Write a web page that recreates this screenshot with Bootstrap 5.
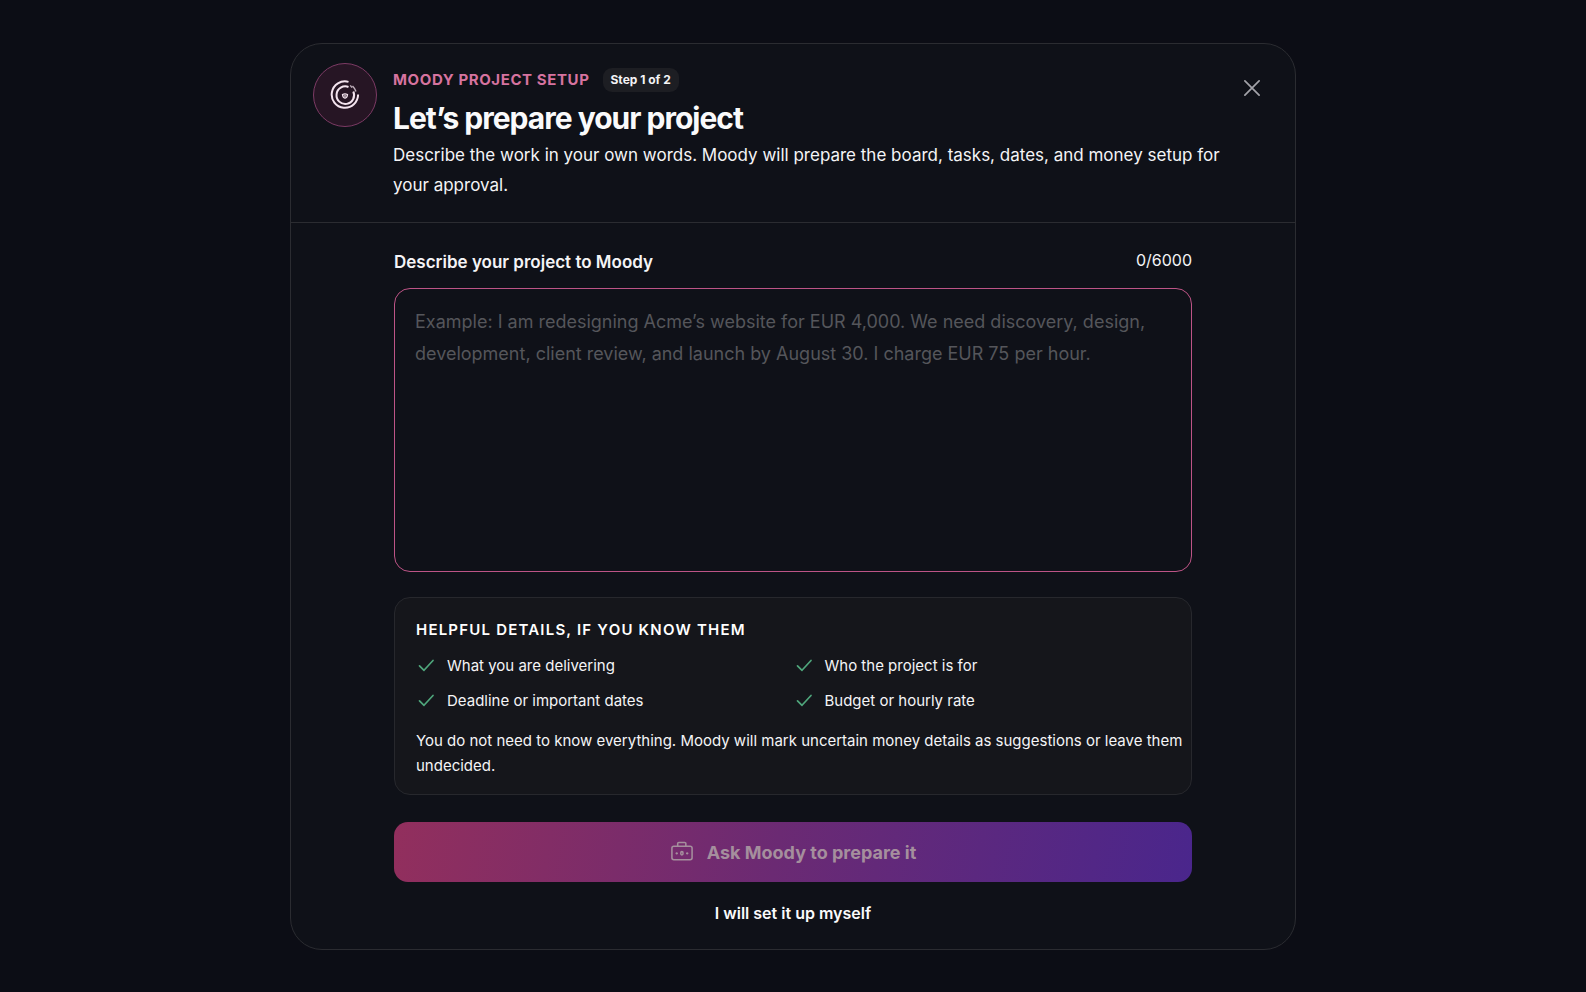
<!DOCTYPE html>
<html lang="en" data-bs-theme="dark">
<head>
<meta charset="utf-8">
<meta name="viewport" content="width=device-width, initial-scale=1">
<title>Moody project setup</title>
<link href="https://cdn.jsdelivr.net/npm/bootstrap@5.3.0/dist/css/bootstrap.min.css" rel="stylesheet">
<style>
  body {
    font-family: Inter, "Liberation Sans", sans-serif;
    background: #0c0d15;
    color: #f4f4f6;
  }
  .setup-page { padding: 43px 16px 42px; }
  .setup-card {
    max-width: 1006px;
    background: #0f1118;
    border: 1px solid #2b2c31;
    border-radius: 32px;
  }
  .setup-header { padding: 19px 22px 22px; border-bottom: 1px solid #2b2c31; }
  .setup-logo {
    width: 64px; height: 64px;
    color: #f3e3ee;
    background: #261524;
    border: 1px solid #7c3a64;
  }
  .setup-heading { padding-top: 5px; }
  .eyebrow-row { gap: 13px; }
  .eyebrow { font-size: 15px; line-height: 24px; font-weight: 700; letter-spacing: .04em; color: #d6739f; }
  .step-pill {
    font-size: 12px; line-height: 16px; font-weight: 700;
    padding: 4px 8px; border-radius: 9px;
    background: #1d1e23; color: #f4f4f6;
  }
  .setup-title { font-size: 30px; line-height: 40px; font-weight: 700; letter-spacing: -1px; margin: 6px 0 2px; color: #fafafb; }
  .setup-lead { font-size: 17px; line-height: 30px; }
  .btn-dismiss { padding: 12px; margin: 5px 1px 0 0; color: #a3a3a9; border: 0; line-height: 1; }
  .setup-body { padding: 26px 103px 18px; }
  .field-row { margin-bottom: 13px; }
  .field-label { font-size: 17px; line-height: 26px; font-weight: 600; }
  .field-count { font-size: 16px; line-height: 22px; }
  .brief-input, .brief-input:focus {
    height: 284px;
    padding: 17px 20px;
    font-size: 18px; line-height: 32px;
    background: #0f1118;
    border: 1px solid #bd5486;
    border-radius: 16px;
    box-shadow: none;
    resize: none;
  }
  .brief-input::placeholder { color: #55565b; opacity: 1; }
  .tips {
    margin-top: 25px;
    padding: 20px 4px 16px 21px;
    background: #15161b;
    border: 1px solid #27282d;
    border-radius: 16px;
  }
  .tips-title { font-size: 15px; line-height: 24px; font-weight: 600; letter-spacing: .08em; margin-bottom: 11px; }
  .tips-text { font-size: 15px; line-height: 25px; }
  .tips-list { row-gap: 10px; margin-bottom: 15px; }
  .tip-item { gap: 9px; }
  .tip-icon { color: #4fa67c; }
  .btn-ask, .btn-ask:disabled {
    margin-top: 27px; height: 60px; gap: 13px;
    font-size: 18px; font-weight: 700;
    color: #a58f9d;
    border: 0; border-radius: 14px;
    background: linear-gradient(100deg, #922f5d, #6b2a73 48%, #4a268c);
    opacity: 1;
  }
  .btn-self { margin-top: 13px; padding: 6px 12px; font-size: 16px; line-height: 24px; font-weight: 600; color: #fafafb; border: 0; }
  @media (max-width: 767px) {
    .setup-body { padding-left: 22px; padding-right: 22px; }
  }
</style>
</head>
<body>
<main class="setup-page">
  <section class="setup-card mx-auto" role="dialog" aria-labelledby="setup-title">
    <header class="setup-header d-flex align-items-start">
      <div class="setup-logo rounded-circle d-flex align-items-center justify-content-center flex-shrink-0 me-3">
        <svg width="30" height="30" viewBox="0 0 30 30" fill="none" stroke="currentColor" stroke-width="2" aria-hidden="true">
          <path d="M18.500 1.900A13.200 13.200 0 1 0 28.100 14.500"/>
          <path d="M18.500 7A8.800 8.800 0 1 0 23.300 11.500"/>
          <path d="M20.300 5.300l1.700 2.300M22.500 6Q25 8.500 26 11.500" stroke-width="1.400" opacity=".75"/>
          <path d="M12.500 14.500Q15 13.200 17.500 14.500Q17.200 17.700 15 18.200Q12.800 17.700 12.500 14.500Z" stroke-width="1.300"/>
          <circle cx="15" cy="15.900" r=".7" stroke-width=".8"/>
        </svg>
      </div>
      <div class="setup-heading flex-grow-1">
        <div class="eyebrow-row d-flex align-items-center">
          <span class="eyebrow text-uppercase">Moody project setup</span>
          <span class="step-pill">Step 1 of 2</span>
        </div>
        <h1 class="setup-title" id="setup-title">Let’s prepare your project</h1>
        <p class="setup-lead mb-0">Describe the work in your own words. Moody will prepare the board, tasks, dates, and money setup for your approval.</p>
      </div>
      <button type="button" class="btn btn-dismiss flex-shrink-0" aria-label="Close">
        <svg class="d-block" width="16" height="16" viewBox="0 0 16 16" fill="none" stroke="currentColor" stroke-width="1.700" stroke-linecap="round" aria-hidden="true"><path d="M.9.9l14.200 14.200M15.100.9L.9 15.100"/></svg>
      </button>
    </header>

    <form class="setup-body">
      <div class="field-row d-flex justify-content-between align-items-start">
        <label class="field-label" for="brief">Describe your project to Moody</label>
        <span class="field-count">0/6000</span>
      </div>
      <textarea class="form-control brief-input d-block" id="brief" maxlength="6000" placeholder="Example: I am redesigning Acme’s website for EUR 4,000. We need discovery, design, development, client review, and launch by August 30. I charge EUR 75 per hour."></textarea>

      <section class="tips">
        <h2 class="tips-title text-uppercase">Helpful details, if you know them</h2>
        <ul class="row gx-0 pe-3 tips-list list-unstyled tips-text">
          <li class="col-6 tip-item d-flex align-items-center"><svg class="tip-icon flex-shrink-0" width="22" height="22" viewBox="0 0 22 22" fill="none" stroke="currentColor" stroke-width="1.700" stroke-linecap="round" stroke-linejoin="round" aria-hidden="true"><path d="M3.500 10.800l4.500 4.500L17 5.500"/></svg>What you are delivering</li>
          <li class="col-6 tip-item d-flex align-items-center"><svg class="tip-icon flex-shrink-0" width="22" height="22" viewBox="0 0 22 22" fill="none" stroke="currentColor" stroke-width="1.700" stroke-linecap="round" stroke-linejoin="round" aria-hidden="true"><path d="M3.500 10.800l4.500 4.500L17 5.500"/></svg>Who the project is for</li>
          <li class="col-6 tip-item d-flex align-items-center"><svg class="tip-icon flex-shrink-0" width="22" height="22" viewBox="0 0 22 22" fill="none" stroke="currentColor" stroke-width="1.700" stroke-linecap="round" stroke-linejoin="round" aria-hidden="true"><path d="M3.500 10.800l4.500 4.500L17 5.500"/></svg>Deadline or important dates</li>
          <li class="col-6 tip-item d-flex align-items-center"><svg class="tip-icon flex-shrink-0" width="22" height="22" viewBox="0 0 22 22" fill="none" stroke="currentColor" stroke-width="1.700" stroke-linecap="round" stroke-linejoin="round" aria-hidden="true"><path d="M3.500 10.800l4.500 4.500L17 5.500"/></svg>Budget or hourly rate</li>
        </ul>
        <p class="tips-text mb-0">You do not need to know everything. Moody will mark uncertain money details as suggestions or leave them undecided.</p>
      </section>

      <button type="submit" class="btn btn-ask w-100 d-flex align-items-center justify-content-center" disabled>
        <svg width="24" height="24" viewBox="0 0 25 24" fill="none" stroke="currentColor" stroke-width="1.600" stroke-linejoin="round" aria-hidden="true">
          <rect x="2" y="6" width="21" height="14" rx="2"/>
          <path d="M8 6V3.200A1.200 1.200 0 0 1 9.200 2h6.100a1.200 1.200 0 0 1 1.200 1.200V6"/>
          <ellipse cx="12.400" cy="13.400" rx="1.200" ry="1.800"/>
          <path d="M7 12.200v2.400M5.800 13.400h2.400M17.900 12.200v2.400M16.700 13.400h2.400" stroke-width="1.200"/>
        </svg>
        Ask Moody to prepare it
      </button>
      <div class="text-center">
        <button type="button" class="btn btn-self">I will set it up myself</button>
      </div>
    </form>
  </section>
</main>
<script src="https://cdn.jsdelivr.net/npm/bootstrap@5.3.0/dist/js/bootstrap.bundle.min.js"></script>
</body>
</html>
